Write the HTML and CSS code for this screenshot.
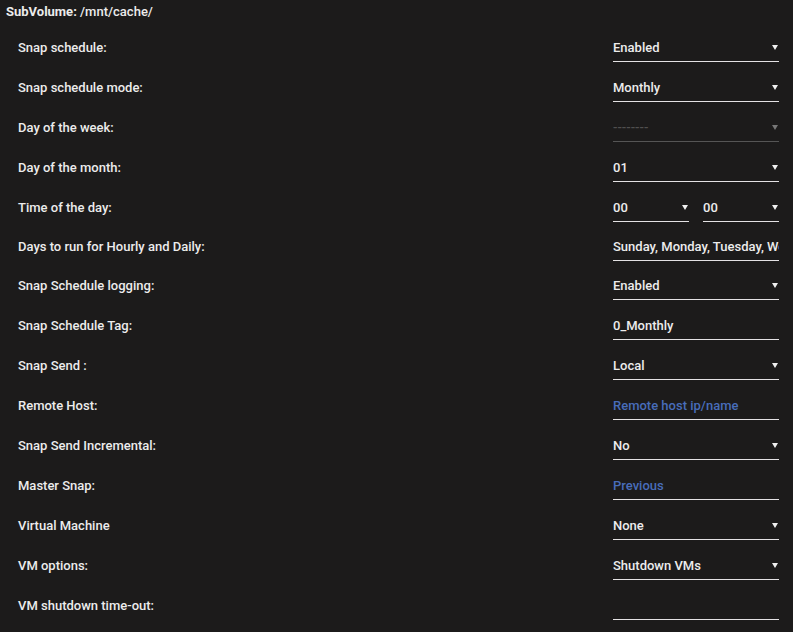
FILE: index.html
```html
<!DOCTYPE html>
<html lang="en">
<head>
  <meta charset="UTF-8">
  <title>Snapshot Schedule</title>
  <link rel="stylesheet" href="styles.css">
</head>
<body>

  <div class="title"><b>SubVolume:</b> /mnt/cache/</div>

  <div class="settings">
    <div class="row">
      <span class="label">Snap schedule:</span>
      <div class="field select"><select><option>Enabled</option><option>Disabled</option></select></div>
    </div>
    <div class="row">
      <span class="label">Snap schedule mode:</span>
      <div class="field select"><select><option>Monthly</option><option>Weekly</option><option>Daily</option><option>Hourly</option></select></div>
    </div>
    <div class="row">
      <span class="label">Day of the week:</span>
      <div class="field select disabled"><select disabled><option>--------</option></select></div>
    </div>
    <div class="row">
      <span class="label">Day of the month:</span>
      <div class="field select"><select><option>01</option><option>02</option></select></div>
    </div>
    <div class="row">
      <span class="label">Time of the day:</span>
      <div class="pair">
        <div class="field select"><select><option>00</option></select></div>
        <div class="field select"><select><option>00</option></select></div>
      </div>
    </div>
    <div class="row short">
      <span class="label">Days to run for Hourly and Daily:</span>
      <div class="field"><input type="text" value="Sunday, Monday, Tuesday, Wednesday, Thursday, Friday, Saturday" readonly></div>
    </div>
    <div class="row">
      <span class="label">Snap Schedule logging:</span>
      <div class="field select"><select><option>Enabled</option><option>Disabled</option></select></div>
    </div>
    <div class="row">
      <span class="label">Snap Schedule Tag:</span>
      <div class="field"><input type="text" value="0_Monthly"></div>
    </div>
    <div class="row">
      <span class="label">Snap Send :</span>
      <div class="field select"><select><option>Local</option><option>Remote</option></select></div>
    </div>
    <div class="row">
      <span class="label">Remote Host:</span>
      <div class="field"><input type="text" placeholder="Remote host ip/name"></div>
    </div>
    <div class="row">
      <span class="label">Snap Send Incremental:</span>
      <div class="field select"><select><option>No</option><option>Yes</option></select></div>
    </div>
    <div class="row">
      <span class="label">Master Snap:</span>
      <div class="field"><input type="text" placeholder="Previous"></div>
    </div>
    <div class="row">
      <span class="label">Virtual Machine</span>
      <div class="field select"><select><option>None</option></select></div>
    </div>
    <div class="row">
      <span class="label">VM options:</span>
      <div class="field select"><select><option>Shutdown VMs</option></select></div>
    </div>
    <div class="row">
      <span class="label">VM shutdown time-out:</span>
      <div class="field"><input type="text"></div>
    </div>
  </div>

</body>
</html>
```

FILE: styles.css
```css
* {
  box-sizing: border-box;
}

body {
  margin: 0;
  background: #1c1b1b;
  color: #ececec;
  font-family: Roboto, "Open Sans", sans-serif;
  font-size: 13px;
  font-weight: 500;
}

.title {
  height: 24px;
  line-height: 24px;
  padding-left: 6px;
}

.title b {
  font-weight: bold;
}

.settings {
  padding: 3px 14px 0 18px;
}

.row {
  display: grid;
  grid-template-columns: 1fr 166px;
  align-items: center;
  height: 40px;
}

.row.short {
  height: 38px;
}

.field {
  position: relative;
  height: 30px;
  border-bottom: 1px solid #e4e2e4;
}

.field select,
.field input {
  display: block;
  width: 100%;
  height: 29px;
  margin: 0;
  padding: 2px 14px 0 0;
  border: none;
  outline: none;
  background: transparent;
  color: #ececec;
  font: inherit;
  -webkit-appearance: none;
  appearance: none;
}

.field input {
  padding-right: 0;
}

.field input::placeholder {
  color: #486dba;
}

.select::after {
  content: "";
  position: absolute;
  right: 1px;
  top: 13px;
  border-left: 3px solid transparent;
  border-right: 3px solid transparent;
  border-top: 5px solid #f0f0f0;
  pointer-events: none;
}

.disabled {
  border-bottom-color: #555;
}

.disabled select {
  color: #666;
}

.disabled::after {
  border-top-color: #777;
}

.pair {
  display: flex;
  gap: 14px;
}

.pair .field {
  flex: 1;
}
```
